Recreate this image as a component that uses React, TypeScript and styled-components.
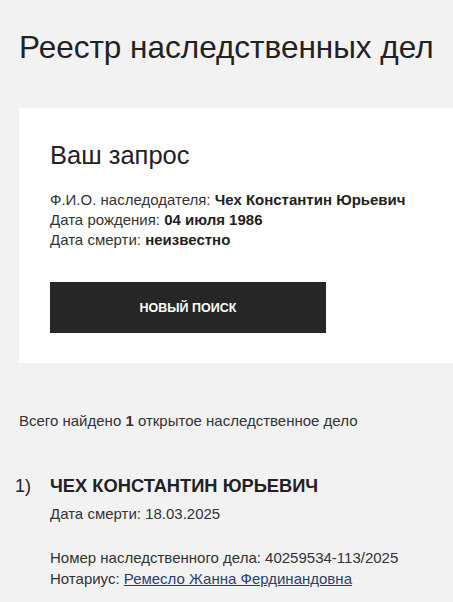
import React from 'react';
import styled, { createGlobalStyle } from 'styled-components';

const GlobalStyle = createGlobalStyle`
    html, body {
        margin: 0;
        padding: 0;
        background: #f2f2f2;
    }
    body {
        font-family: 'Liberation Sans', Arial, sans-serif;
        color: #222;
        overflow: hidden;
    }
`;

const Page = styled.div`
    padding: 27px 0 0 19px;
`;

const Title = styled.h1`
    margin: 0;
    font-size: 31.5px;
    font-weight: 400;
    line-height: 40px;
    color: #222;
`;

const Card = styled.section`
    margin-top: 41px;
    background: #fff;
    padding: 32px 31px 30px 31px;
`;

const CardTitle = styled.h2`
    margin: 0 0 20px;
    font-size: 25.5px;
    font-weight: 400;
    line-height: 30px;
`;

const InfoLine = styled.div`
    font-size: 15px;
    line-height: 20px;
    color: #333;

    b {
        font-weight: 700;
        color: #222;
    }
`;

const Button = styled.button`
    display: block;
    margin-top: 32px;
    width: 276px;
    height: 51px;
    border: none;
    background: #262626;
    color: #fff;
    font-family: 'Liberation Sans', Arial, sans-serif;
    font-size: 12.5px;
    font-weight: 700;
    text-transform: uppercase;
    cursor: pointer;
`;

const Summary = styled.p`
    margin: 47px 0 0;
    font-size: 15px;
    line-height: 21px;
    color: #333;
`;

const Result = styled.div`
    display: grid;
    grid-template-columns: 35px 1fr;
    margin-top: 42px;
    margin-left: -4px;
`;

const Index = styled.div`
    font-size: 18px;
    line-height: 26px;
    color: #222;
`;

const Name = styled.div`
    font-size: 18.3px;
    font-weight: 700;
    line-height: 26px;
    color: #222;
`;

const Detail = styled.div<{ $gap?: number }>`
    margin-top: ${p => p.$gap ?? 0}px;
    font-size: 15px;
    line-height: 21px;
    color: #333;
`;

const Link = styled.a`
    color: #2b3f6c;
    text-decoration: underline;
`;

export default function App() {
    return (
        <>
            <GlobalStyle />
            <Page>
                <Title>Реестр наследственных дел</Title>
                <Card>
                    <CardTitle>Ваш запрос</CardTitle>
                    <InfoLine>
                        Ф.И.О. наследодателя: <b>Чех Константин Юрьевич</b>
                    </InfoLine>
                    <InfoLine>
                        Дата рождения: <b>04 июля 1986</b>
                    </InfoLine>
                    <InfoLine>
                        Дата смерти: <b>неизвестно</b>
                    </InfoLine>
                    <Button>Новый поиск</Button>
                </Card>
                <Summary>
                    Всего найдено <b>1</b> открытое наследственное дело
                </Summary>
                <Result>
                    <Index>1)</Index>
                    <div>
                        <Name>ЧЕХ КОНСТАНТИН ЮРЬЕВИЧ</Name>
                        <Detail $gap={4}>Дата смерти: 18.03.2025</Detail>
                        <Detail $gap={23}>Номер наследственного дела: 40259534-113/2025</Detail>
                        <Detail>
                            Нотариус: <Link href="#">Ремесло Жанна Фердинандовна</Link>
                        </Detail>
                    </div>
                </Result>
            </Page>
        </>
    );
}
